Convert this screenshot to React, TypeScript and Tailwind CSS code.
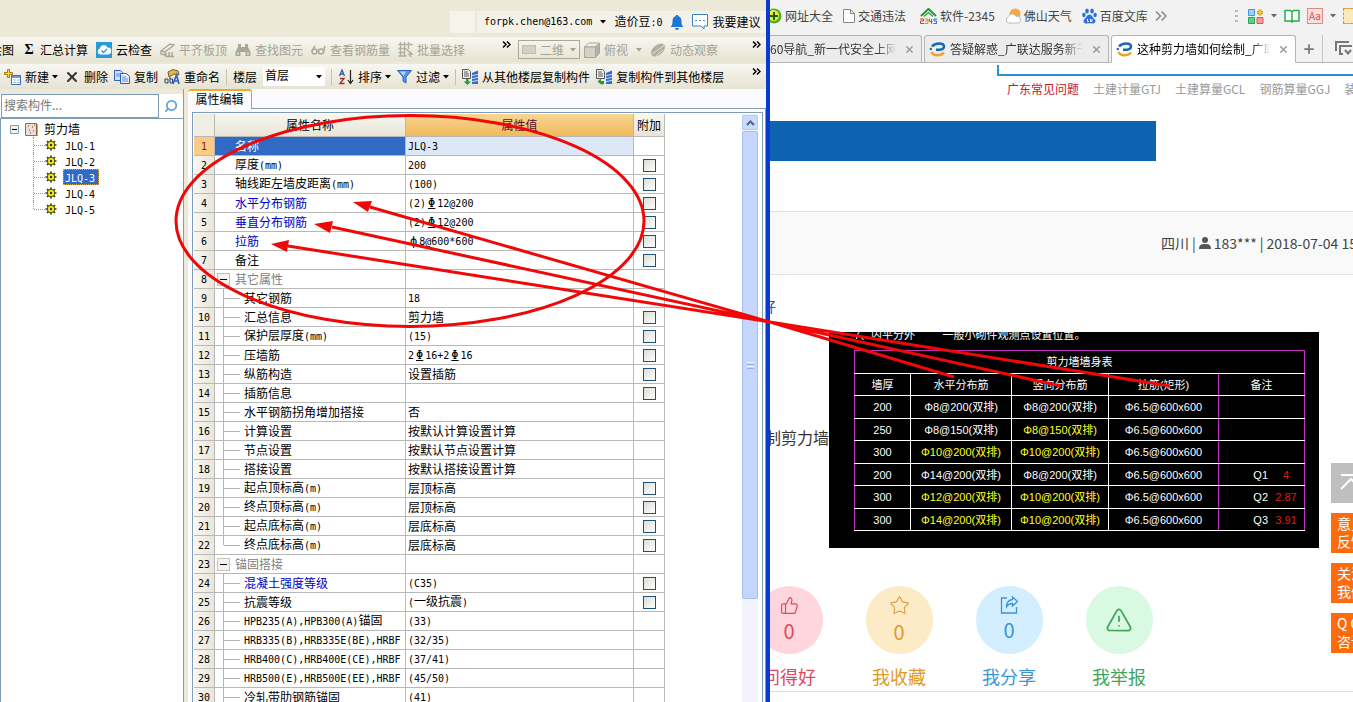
import type { ReactNode } from "react";
import { ThumbsUp, Star, TriangleAlert, X, Plus, Copy, Search } from "lucide-react";

type Row = {
  name: string;
  value?: string;
  level?: "group" | "child" | "last";
  blue?: boolean;
  check?: boolean;
};

const rows: Row[] = [
  { name: "名称", value: "JLQ-3" },
  { name: "厚度(mm)", value: "200", check: true },
  { name: "轴线距左墙皮距离(mm)", value: "(100)", check: true },
  { name: "水平分布钢筋", value: "(2)Φ12@200", blue: true, check: true },
  { name: "垂直分布钢筋", value: "(2)Φ12@200", blue: true, check: true },
  { name: "拉筋", value: "ф8@600*600", blue: true, check: true },
  { name: "备注", check: true },
  { name: "其它属性", level: "group" },
  { name: "其它钢筋", value: "18", level: "child" },
  { name: "汇总信息", value: "剪力墙", level: "child", check: true },
  { name: "保护层厚度(mm)", value: "(15)", level: "child", check: true },
  { name: "压墙筋", value: "2Φ16+2Φ16", level: "child", check: true },
  { name: "纵筋构造", value: "设置插筋", level: "child", check: true },
  { name: "插筋信息", level: "child", check: true },
  { name: "水平钢筋拐角增加搭接", value: "否", level: "child" },
  { name: "计算设置", value: "按默认计算设置计算", level: "child" },
  { name: "节点设置", value: "按默认节点设置计算", level: "child" },
  { name: "搭接设置", value: "按默认搭接设置计算", level: "child" },
  { name: "起点顶标高(m)", value: "层顶标高", level: "child", check: true },
  { name: "终点顶标高(m)", value: "层顶标高", level: "child", check: true },
  { name: "起点底标高(m)", value: "层底标高", level: "child", check: true },
  { name: "终点底标高(m)", value: "层底标高", level: "last", check: true },
  { name: "锚固搭接", level: "group" },
  { name: "混凝土强度等级", value: "(C35)", level: "child", blue: true, check: true },
  { name: "抗震等级", value: "(一级抗震)", level: "child", check: true },
  { name: "HPB235(A),HPB300(A)锚固", value: "(33)", level: "child" },
  { name: "HRB335(B),HRB335E(BE),HRBF", value: "(32/35)", level: "child" },
  { name: "HRB400(C),HRB400E(CE),HRBF", value: "(37/41)", level: "child" },
  { name: "HRB500(E),HRB500E(EE),HRBF", value: "(45/50)", level: "child" },
  { name: "冷轧带肋钢筋锚固", value: "(41)", level: "child" },
];

const components = ["JLQ-1", "JLQ-2", "JLQ-3", "JLQ-4", "JLQ-5"];

const wallRows = [
  { t: "200", h: "Φ8@200(双排)", v: "Φ8@200(双排)" },
  { t: "250", h: "Φ8@150(双排)", v: "Φ8@150(双排)", vy: true },
  { t: "300", h: "Φ10@200(双排)", v: "Φ10@200(双排)", hy: true, vy: true },
  { t: "200", h: "Φ14@200(双排)", v: "Φ8@200(双排)", q: "Q1", n: "4" },
  { t: "300", h: "Φ12@200(双排)", v: "Φ10@200(双排)", hy: true, vy: true, q: "Q2", n: "2.87" },
  { t: "300", h: "Φ14@200(双排)", v: "Φ10@200(双排)", hy: true, vy: true, q: "Q3", n: "3.91" },
];

// Latin runs are set in a half-width mono face, ribbed bar signs are underlined
function Mixed({ text }: { text: string }) {
  return (
    <>
      {text.split(/([\x20-\x7e]+|Φ|ф)/).map((part, i) => {
        if (part === "Φ" || part === "ф") {
          return (
            <span key={i} className={`px-[2px] font-['DejaVu_Sans_Mono',monospace] text-[12px] ${part === "Φ" ? "underline underline-offset-1" : ""}`}>
              {part}
            </span>
          );
        }
        if (/^[\x20-\x7e]+$/.test(part)) {
          return (
            <span key={i} className="font-['DejaVu_Sans_Mono',monospace] text-[10px]">
              {part}
            </span>
          );
        }
        return part;
      })}
    </>
  );
}

function Caret({ className = "text-black" }: { className?: string }) {
  return (
    <svg width="6" height="4" viewBox="0 0 6 4" className={`shrink-0 ${className}`}>
      <path d="M0 0h6L3 3.5z" fill="currentColor" />
    </svg>
  );
}

function ToolButton({ icon, label, caret, disabled }: { icon?: ReactNode; label: string; caret?: boolean; disabled?: boolean }) {
  return (
    <button disabled={disabled} className={`flex items-center gap-1 shrink-0 whitespace-nowrap ${disabled ? "text-[#a5a294]" : "text-black"}`}>
      {icon}
      {label}
      {caret && <Caret className="-ml-px" />}
    </button>
  );
}

function Separator() {
  return <span className="w-px h-4 bg-[#c5c2b2] shrink-0" />;
}

function MoreButton() {
  return (
    <button aria-label="更多" className="shrink-0 self-start pt-1">
      <svg width="9" height="7" viewBox="0 0 9 7" fill="none" stroke="#000" strokeWidth="1.5" className="block">
        <path d="M1 .5l3 3-3 3M5 .5l3 3-3 3" />
      </svg>
    </button>
  );
}

function CloudIcon() {
  return (
    <svg width="16" height="16" viewBox="0 0 16 16">
      <path d="M0 0h16v16H0z" fill="#2b9ad8" />
      <path d="M4.500 12.500a3 3 0 0 1-.6-5.900A4 4 0 0 1 11.500 5.500a3.500 3.500 0 0 1 .5 7z" fill="#fff" />
      <path d="M5.500 8.500l2 2 3.500-3.500" fill="none" stroke="#2b9ad8" strokeWidth="1.400" />
    </svg>
  );
}

function AlignIcon() {
  return (
    <svg width="15" height="16" viewBox="0 0 15 16" fill="none" stroke="#aaa799" strokeWidth="1.500">
      <path d="M1 9l9-7 4 1-9 7zM1 9v3l4 1V10M6 11v4M6 14.500h8M9 10v5M12 10v5" />
    </svg>
  );
}

function BinocularsIcon() {
  return (
    <svg width="16" height="14" viewBox="0 0 16 14" fill="#aaa799">
      <path d="M3 1h3v3h4V1h3v3l2.500 5v4h-5V9H5.500v4h-5V9L3 4z" />
      <path d="M2 9.500h2v2H2zM12 9.500h2v2h-2z" fill="#dcdacd" />
    </svg>
  );
}

function GlassesIcon() {
  return (
    <svg width="15" height="10" viewBox="0 0 15 10" fill="none" stroke="#aaa799" strokeWidth="1.500">
      <circle cx="3.500" cy="6.500" r="2.500" />
      <circle cx="10" cy="6.500" r="2.500" />
      <path d="M1 6L4 1M12.700 6.500L14 1M6 6.500h1.500" />
    </svg>
  );
}

function BatchIcon() {
  return (
    <svg width="15" height="15" viewBox="0 0 15 15" fill="none" stroke="#b1aea0">
      <path d="M.5 2.500h14M.5 6.500h8M.5 10.500h6M.5 14h8M2.500 0v14M6.500 0v14M10.500 0v7" strokeWidth="1.300" />
      <path d="M8 7l6 5-3 .2L13 15" strokeWidth="1.500" />
    </svg>
  );
}

function CubeIcon() {
  return (
    <svg width="16" height="16" viewBox="0 0 16 16" stroke="#aaa799" className="shrink-0">
      <path d="M.5 5l4-4h11l-4 4z" fill="#efeee6" />
      <path d="M.5 5h11v10.500H.5z" fill="#d4d2c6" />
      <path d="M11.500 5l4-4v10l-4 4.500z" fill="#b5b2a5" />
    </svg>
  );
}

function OrbitIcon() {
  return (
    <svg width="16" height="16" viewBox="0 0 16 16">
      <ellipse cx="8" cy="8" rx="8" ry="5" transform="rotate(-40 8 8)" fill="#b1aea2" />
      <path d="M2 12l9-6 4-4M6 14l7-6" stroke="#e3e1d5" fill="none" />
    </svg>
  );
}

function NewIcon() {
  return (
    <svg width="17" height="16" viewBox="0 0 17 16">
      <path d="M7.500 6.500h9v9h-9z" fill="#fff" stroke="#3d6db5" />
      <path d="M8 7h8v2H8z" fill="#6e9be0" />
      <path d="M9 11h3M13 11h3M9 13.500h3M13 13.500h3" stroke="#9ab9e8" />
      <path d="M3.500.5h2v3h3v2h-3v3h-2v-3h-3v-2h3z" fill="#fbd34b" stroke="#a97c12" />
    </svg>
  );
}

function CopyDocIcon() {
  return (
    <svg width="16" height="14" viewBox="0 0 16 14" stroke="#2f5fb0">
      <path d="M.5.5h6l2 2v8h-8z" fill="#cfe0fa" />
      <path d="M6.500 3.500h6l3 3v7h-9z" fill="#e6effd" />
      <path d="M2 4h4M2 6h4M8 7h4M8 9h6M8 11h6" stroke="#5c8ad6" />
    </svg>
  );
}

function RenameIcon() {
  return (
    <svg width="16" height="16" viewBox="0 0 16 16">
      <path d="M4 3l5-2.500 5 1.500 1 4-5-1-5 3z" fill="#e2b650" stroke="#7a5a18" />
      <path d="M1 14v-4h3v4H1.500M6 8v6h2.500v-4H6" fill="none" stroke="#2a3f6b" />
      <path d="M9 15l3.500-9L15 15M10 12h4" fill="none" stroke="#2d67c9" strokeWidth="1.700" />
    </svg>
  );
}

function SortIcon() {
  return (
    <svg width="16" height="16" viewBox="0 0 16 16" fill="none">
      <path d="M1.500 7L4 1l2.500 6M2.500 5h3" stroke="#2d5fb5" strokeWidth="1.300" />
      <path d="M2 9.500h4l-4 5h4.500" stroke="#a4302c" strokeWidth="1.400" />
      <path d="M12.500 1v13M10 11l2.500 3.500L15 11" stroke="#222" strokeWidth="1.200" />
    </svg>
  );
}

function FunnelIcon() {
  return (
    <svg width="15" height="14" viewBox="0 0 15 14">
      <path d="M.5.500h14L9 7v6L6 11V7z" fill="#5b93e6" stroke="#2a5fb8" />
      <path d="M3 1.500h6L6.500 6z" fill="#b7d3fa" />
    </svg>
  );
}

function FloorCopyIcon({ back }: { back?: boolean }) {
  return (
    <svg width="16" height="16" viewBox="0 0 16 16">
      <path d="M.5.500h6l2 2v7h-8z" fill="#f1f1f1" stroke="#555" />
      <path d="M2 3h4M2 5h5M2 7h5" stroke="#555" />
      <path d="M10 4l6-2.500V15h-6z" fill="#2f6dc6" />
      <path d="M10 6.500l6-1M10 9.500l6-1M10 12.500l6-1" stroke="#cde0fa" />
      <path d={back ? "M8 15V12H5V9.500L1.500 12.500 5 15.500z" : "M4 10h2.500v2.500H9L5.500 16 1.500 12.500H4z"} fill="#2b9a3e" />
    </svg>
  );
}

function GearIcon() {
  return (
    <svg width="12" height="12" viewBox="0 0 12 12">
      <path d="M6 .500v11M.5 6h11M2 2l8 8M10 2l-8 8" stroke="#3a3a00" strokeWidth="1.600" />
      <circle cx="6" cy="6" r="3.800" fill="#f2e81c" stroke="#4a4800" />
      <circle cx="6" cy="6" r="1.200" fill="#333" />
    </svg>
  );
}

function GlodonIcon() {
  return (
    <svg width="17" height="15" viewBox="0 0 17 15" fill="none" strokeWidth="2.500" className="shrink-0">
      <path d="M3 4.500C6 .500 15 .500 15 4.500c0 3-4 3.500-8 3.300" stroke="#1769b8" />
      <path d="M2.500 10c2 4.500 9.500 4 12.500.500" stroke="#f0a02c" />
      <circle cx="1.800" cy="7" r="1.200" fill="#1769b8" stroke="none" />
    </svg>
  );
}

function TopBar() {
  return (
    <div className="h-[37px] flex items-start justify-end gap-[2px] pt-[11px]">
      <span className="w-[25px] h-[22px] bg-[#f5f3ea]" />
      <div className="h-[22px] w-[289px] flex items-center gap-2 pl-[7px] bg-[#f4f2e8]">
        <button className="flex items-center gap-2">
          <Mixed text="forpk.chen@163.com" />
          <Caret />
        </button>
        <span><Mixed text="造价豆:0" /></span>
        <button aria-label="通知">
          <svg width="14" height="15" viewBox="0 0 14 15" fill="#1d77d2">
            <path d="M7 0c1 0 1.500.6 1.500 1.300C11 2 11.500 4 11.500 6.500c0 3 .5 4 2 5.500H.5c1.500-1.500 2-2.500 2-5.500C2.500 4 3 2 5.500 1.300 5.500.600 6 0 7 0zM5 13h4c0 2.500-4 2.500-4 0z" />
          </svg>
        </button>
        <button className="flex items-center gap-1 whitespace-nowrap">
          <svg width="16" height="16" viewBox="0 0 16 16" fill="#fff" stroke="#3b83c8">
            <path d="M.5.500h15v11.500H12v3l-3-3H.5z" />
            <path d="M3 6.500h2M7 6.500h2M11 6.500h2" />
          </svg>
          我要建议
        </button>
      </div>
    </div>
  );
}

function Toolbars() {
  const bar = "h-[25px] flex items-center bg-linear-to-b from-[#f8f7f1] to-[#e6e3d2] pr-[5px]";
  return (
    <div className="flex flex-col gap-[2px]">
      <div className={bar}>
        <div className="flex-1 flex items-center gap-2">
          <button className="w-[14px] overflow-hidden flex justify-end whitespace-nowrap">绘图</button>
          <ToolButton icon={<span className="w-[14px] text-[14px] font-bold text-center font-['Liberation_Serif',serif]">Σ</span>} label="汇总计算" />
          <ToolButton icon={<CloudIcon />} label="云检查" />
          <ToolButton disabled icon={<AlignIcon />} label="平齐板顶" />
          <ToolButton disabled icon={<BinocularsIcon />} label="查找图元" />
          <ToolButton disabled icon={<GlassesIcon />} label="查看钢筋量" />
          <ToolButton disabled icon={<BatchIcon />} label="批量选择" />
        </div>
        <MoreButton />
        <div className="w-[250px] self-stretch flex items-center pl-[7px] gap-1">
          <button disabled className="h-[19px] w-[62px] shrink-0 flex items-center gap-1 px-[3px] border border-[#aca899] text-[#a5a294] whitespace-nowrap">
            <span className="w-[14px] h-[9px] shrink-0 bg-[#d3d1c5] border border-[#c0beb0]" />
            二维
            <Caret className="ml-auto text-[#a5a294]" />
          </button>
          <ToolButton disabled icon={<CubeIcon />} label="俯视" />
          <span className="px-1"><Caret className="text-[#a5a294]" /></span>
          <ToolButton disabled icon={<OrbitIcon />} label="动态观察" />
          <span className="flex-1" />
          <MoreButton />
        </div>
      </div>
      <div className={bar}>
        <div className="flex-1 flex items-center gap-[6px] pl-1">
          <ToolButton icon={<NewIcon />} label="新建" caret />
          <ToolButton icon={<X size={16} strokeWidth={3} className="text-[#333]" />} label="删除" />
          <ToolButton icon={<CopyDocIcon />} label="复制" />
          <ToolButton icon={<RenameIcon />} label="重命名" />
          <Separator />
          <label htmlFor="floor">楼层</label>
          <div className="relative flex items-center">
            <select id="floor" className="appearance-none w-[62px] h-[19px] bg-white pl-[2px] pb-[3px] leading-4 outline-none">
              <option>首层</option>
            </select>
            <span className="absolute right-[3px] pointer-events-none"><Caret /></span>
          </div>
          <Separator />
          <ToolButton icon={<SortIcon />} label="排序" caret />
          <ToolButton icon={<FunnelIcon />} label="过滤" caret />
          <Separator />
          <ToolButton icon={<FloorCopyIcon />} label="从其他楼层复制构件" />
          <ToolButton icon={<FloorCopyIcon back />} label="复制构件到其他楼层" />
        </div>
        <MoreButton />
      </div>
    </div>
  );
}

function ComponentTree() {
  return (
    <aside className="w-[184px] shrink-0 flex flex-col pt-[5px] bg-[#ece9d8] border-r border-[#8a9bb0]">
      <div className="flex h-6 bg-white">
        <input aria-label="搜索构件" placeholder="搜索构件..." className="w-[158px] border border-[#7f9db9] bg-white px-[2px] pb-[3px] ml-px placeholder:text-[#777] outline-none" />
        <button aria-label="搜索" className="flex-1 flex items-center justify-center text-[#5aa2e0]">
          <Search size={14} strokeWidth={3} className="-scale-x-100" />
        </button>
      </div>
      <div className="flex-1 min-h-0 bg-white border-l border-t border-[#7f9db9] pt-[2px] pl-[9px]">
        <div className="flex items-center h-4 gap-[6px]">
          <svg width="9" height="9" viewBox="0 0 9 9">
            <path d="M.5.500h8v8h-8z" fill="#f3f1ea" stroke="#7b9ebd" />
            <path d="M2 4.500h5" stroke="#000" />
          </svg>
          <svg width="13" height="13" viewBox="0 0 13 13">
            <path d="M.5.500h11v12H.5z" fill="#eadfd8" stroke="#a9653a" />
            <path d="M3 3h1M7 4h1M4 7h1M8 8h1M5 10h1M9 2h1" stroke="#7c3f27" />
            <path d="M12 1v12" stroke="#8d4a20" />
          </svg>
          <span>剪力墙</span>
        </div>
        <ul className="pl-[23px]">
          {components.map((name, i) => (
            <li key={name} className="flex items-center h-4">
              <span className={`border-l border-dotted border-[#999] ${i === components.length - 1 ? "h-2 self-start" : "h-4"}`} />
              <span className="w-[11px] border-t border-dotted border-[#999]" />
              <GearIcon />
              <button className={`ml-[6px] h-4 px-[2px] leading-4 ${name === "JLQ-3" ? "bg-[#316ac5] text-white pr-1 outline-1 -outline-offset-1 outline-dotted outline-[#d8a050]" : ""}`}>
                <Mixed text={name} />
              </button>
            </li>
          ))}
        </ul>
      </div>
    </aside>
  );
}

function PropertyName({ row }: { row: Row }) {
  const color = row.blue ? "text-[#0000c8]" : row.level === "group" ? "text-[#808080]" : "";
  if (!row.level) {
    return <div className={`pl-5 ${color}`}><Mixed text={row.name} /></div>;
  }
  if (row.level === "group") {
    return (
      <div className={`flex items-center gap-[5px] pl-[2px] ${color}`}>
        <button aria-label={row.name} className="w-[13px] h-[13px] border border-[#c5c2b8] bg-[#f4f3ee] flex items-center justify-center">
          <span className="w-[7px] h-px bg-black" />
        </button>
        {row.name}
      </div>
    );
  }
  return (
    <div className={`flex items-center h-[18px] pl-2 ${color}`}>
      <span className={`w-px bg-[#b5b5b5] ${row.level === "last" ? "h-[9px] self-start" : "h-[18px]"}`} />
      <span className="w-4 h-px bg-[#b5b5b5] mr-1" />
      <span><Mixed text={row.name} /></span>
    </div>
  );
}

function PropertyTable() {
  const line = "border-r border-b border-[#b8b8b8]";
  return (
    <table className="w-[471px] shrink-0 table-fixed border-separate border-spacing-0 self-start">
      <colgroup>
        <col className="w-[21px]" />
        <col className="w-[191px]" />
        <col className="w-[228px]" />
        <col className="w-[31px]" />
      </colgroup>
      <thead>
        <tr className="h-[23px]">
          <th className={`${line} bg-[#f1efe4]`} />
          <th className={`${line} bg-linear-to-b from-[#f8f7f0] to-[#e8e5d6] font-normal`}>属性名称</th>
          <th className={`${line} bg-linear-to-b from-[#f8d592] to-[#f0ba58] font-normal text-[#5a1030]`}>属性值</th>
          <th className={`${line} bg-linear-to-b from-[#f8f7f0] to-[#e8e5d6] font-normal whitespace-nowrap`}>附加</th>
        </tr>
      </thead>
      <tbody>
        {rows.map((row, i) => (
          <tr key={i} className="h-[19px]">
            <td className={`${line} p-0 text-center ${i === 0 ? "bg-[#fbcb86] text-[#8a1a1a]" : "bg-linear-to-r from-[#f8f7f2] to-[#e9e6d9]"}`}>
              <Mixed text={String(i + 1)} />
            </td>
            <td className={`${line} p-0 whitespace-nowrap overflow-hidden ${i === 0 ? "bg-[#316ac5] text-white" : ""}`}>
              <PropertyName row={row} />
            </td>
            <td className={`${line} py-0 pr-0 pl-[2px] whitespace-nowrap ${i === 0 ? "bg-[#dde8f7]" : ""}`}>
              <Mixed text={row.value ?? ""} />
            </td>
            <td className={`${line} p-0`}>
              {row.check && (
                <input type="checkbox" aria-label={row.name} className="block mx-auto appearance-none w-[13px] h-[13px] border border-[#1c5180] bg-linear-to-br from-[#dcdcd7] to-white" />
              )}
            </td>
          </tr>
        ))}
      </tbody>
    </table>
  );
}

function PropertyPanel() {
  return (
    <section className="flex-1 min-w-0 flex flex-col pl-1 bg-[#ece9d8]">
      <div className="flex h-5 bg-[#fbfbfd]">
        <button className="w-[64px] h-5 pb-[2px] bg-[#fcfcfe] border-t-2 border-[#f0a92b] border-r border-r-[#91a7b4] rounded-t-[3px]">属性编辑</button>
        <span className="flex-1 border-b border-[#8a9bb0]" />
      </div>
      <div className="flex-1 min-h-0 flex flex-col bg-[#fbfbfd] pt-[3px] pl-1 pr-[2px] border-r border-[#8a9bb0]">
        <div className="flex-1 min-h-0 flex justify-between bg-white border border-b-0 border-[#7f9db9] pt-px pl-px pr-1 overflow-hidden">
          <PropertyTable />
          <div className="w-4 bg-[#f3f3fb] flex flex-col gap-px pt-px">
            <button aria-label="向上滚动" className="h-[15px] rounded-[2px] border border-[#b4c8f6] bg-[#cbdafc] flex items-center justify-center">
              <svg width="9" height="6" viewBox="0 0 9 6" fill="none" stroke="#4d6185" strokeWidth="2">
                <path d="M1 5l3.500-3.500L8 5" />
              </svg>
            </button>
            <div className="h-[468px] rounded-[2px] border border-[#a6bdf0] bg-[#c5d5fc] flex flex-col items-center justify-center gap-px">
              <span className="w-[7px] h-px bg-[#f0f4fe]" />
              <span className="w-[7px] h-px bg-[#8cb0f8]" />
              <span className="w-[7px] h-px bg-[#f0f4fe]" />
              <span className="w-[7px] h-px bg-[#8cb0f8]" />
            </div>
          </div>
        </div>
      </div>
    </section>
  );
}

function Bookmark({ icon, label }: { icon: ReactNode; label: string }) {
  return (
    <a href="#" className="flex items-center gap-[3px] shrink-0 whitespace-nowrap">
      {icon}
      {label}
    </a>
  );
}

function BookmarksBar() {
  return (
    <nav className="h-[35px] shrink-0 flex items-center pb-[3px] gap-[10px] bg-[#f2f2f2] text-[#444] overflow-hidden">
      <Bookmark
        label="网址大全"
        icon={
          <svg width="12" height="16" viewBox="4 0 12 16">
            <circle cx="8" cy="8" r="7.500" fill="#49b02c" />
            <circle cx="7.500" cy="7.500" r="5.500" fill="#f3ea2e" />
            <path d="M8 4v8M4 8h8" stroke="#1b5c1b" strokeWidth="2" />
          </svg>
        }
      />
      <Bookmark
        label="交通违法"
        icon={
          <svg width="12" height="14" viewBox="0 0 12 14" fill="#fff" stroke="#888">
            <path d="M.5.500h7l4 4v9H.5zM7.500.500v4h4" />
          </svg>
        }
      />
      <div className="pl-1 flex gap-[10px]">
        <Bookmark
          label="软件-2345"
          icon={
            <svg width="17" height="16" viewBox="0 0 17 16" fill="none">
              <path d="M1 8l7.500-7L16 8" stroke="#2b9a3b" strokeWidth="2.200" />
              <path d="M4 8.500l4.500-4 4.500 4" stroke="#2b9a3b" strokeWidth="1.200" />
              <path d="M0 11h3.500v2H.5v2.500H4" stroke="#d33" />
              <path d="M4.500 11H8v4.500H4.500M5 13h3" stroke="#e78a1e" />
              <path d="M9.500 10.500V13.500H12.500M11.500 11v5" stroke="#2b9a3b" />
              <path d="M17 11h-3v2h2.500v2.500h-3" stroke="#2a6fd0" />
            </svg>
          }
        />
        <Bookmark
          label="佛山天气"
          icon={
            <svg width="16" height="16" viewBox="0 0 16 16">
              <circle cx="10" cy="6" r="5.500" fill="#f8a93c" />
              <path d="M3.500 15a3.500 3.500 0 0 1 0-6.500 4 4 0 0 1 7.500 0 3.300 3.300 0 0 1 2 6.500z" fill="#fff" stroke="#bbb" />
            </svg>
          }
        />
      </div>
      <div className="flex items-center gap-[7px]">
        <Bookmark
          label="百度文库"
          icon={
            <svg width="15" height="16" viewBox="0 0 15 16" fill="#2d6fe0">
              <ellipse cx="5" cy="3" rx="1.800" ry="2.600" />
              <ellipse cx="10" cy="3" rx="1.800" ry="2.600" />
              <ellipse cx="1.900" cy="7" rx="1.700" ry="2.300" />
              <ellipse cx="13.100" cy="7" rx="1.700" ry="2.300" />
              <path d="M7.500 6.500c2.500 0 3 3 5 4.500 2 2 .5 5-2 4.500-2-.4-4-.4-6 0-2.500.5-4-2.500-2-4.500 2-1.500 2.500-4.500 5-4.500z" />
              <path d="M5.500 11v2.500h1.500M8.500 11v2.500H10V11" stroke="#fff" fill="none" />
            </svg>
          }
        />
        <button aria-label="更多书签">
          <svg width="12" height="10" viewBox="0 0 12 10" fill="none" stroke="#888" strokeWidth="1.500">
            <path d="M1 .500l4.500 4.500L1 9.500M6.500.500L11 5 6.500 9.500" />
          </svg>
        </button>
      </div>
      <span className="flex-1" />
      <div className="flex items-center gap-[7px] shrink-0">
        <span className="flex flex-col gap-[3px] mr-[3px]">
          <i className="w-[3px] h-[2px] bg-[#bbb]" />
          <i className="w-[3px] h-[2px] bg-[#bbb]" />
          <i className="w-[3px] h-[2px] bg-[#bbb]" />
        </span>
        <button aria-label="扩展">
          <svg width="16" height="15" viewBox="0 0 16 15">
            <path d="M.5.500h6v6h-6z" fill="#9fd0f5" stroke="#3f97dc" />
            <path d="M.5 8.500h6v6h-6z" fill="#62cf84" stroke="#22a84e" />
            <path d="M9 8.500h6v6H9z" fill="#f59a94" stroke="#e0594f" />
            <path d="M12 .500v6M9 3.500h6" stroke="#d99a12" strokeWidth="3" />
            <path d="M12 1v5M9.500 3.500h5" stroke="#ffd84a" />
          </svg>
        </button>
        <Caret className="text-[#666]" />
        <button aria-label="阅读">
          <svg width="16" height="14" viewBox="0 0 16 14" fill="#fff" stroke="#22b14c" strokeWidth="1.500">
            <path d="M1 1.500h5.500L8 3l1.500-1.500H15V12H9.500L8 13l-1.500-1H1zM8 3v10" />
          </svg>
        </button>
        <button className="w-4 h-4 border border-[#e08a86] bg-[#fbe0de] text-[10px] leading-3 text-[#d9534f]">Aa</button>
        <Caret className="text-[#666]" />
        <span className="w-[10px] h-4 border border-r-0 border-dashed border-[#d99a3a] bg-[#fde8bd]" />
      </div>
    </nav>
  );
}

function BrowserTab({ title, icon, active }: { title: string; icon?: boolean; active?: boolean }) {
  return (
    <div
      className={`flex items-center gap-1 px-[6px] border border-[#b5b5b5] rounded-t-[3px] min-w-0 ${
        icon ? "w-[186px] pl-1" : "w-[153px] border-l-0 pl-0 rounded-tl-none"
      } ${active ? "bg-white border-b-white -mb-px text-black" : "border-b-0 bg-[#ececec] text-[#333]"}`}
    >
      {icon && <GlodonIcon />}
      <span className="flex-1 overflow-hidden whitespace-nowrap mask-r-from-85%">{title}</span>
      <button aria-label="关闭标签" className="pl-1">
        <X size={11} strokeWidth={3} className="text-[#999]" />
      </button>
    </div>
  );
}

function TabStrip() {
  return (
    <div className="h-7 shrink-0 flex gap-[2px] bg-[#f2f2f2] border-b border-[#b5b5b5]">
      <BrowserTab title="60导航_新一代安全上网导航" />
      <BrowserTab title="答疑解惑_广联达服务新干线" icon />
      <BrowserTab title="这种剪力墙如何绘制_广联达" icon active />
      <button aria-label="新标签" className="px-1"><Plus size={14} strokeWidth={3} className="text-[#777]" /></button>
      <span className="w-px bg-[#c5c5c5]" />
      <button aria-label="恢复标签" className="pl-[10px] text-[#777]">
        <svg width="18" height="15" viewBox="0 0 18 15" fill="none" stroke="currentColor" strokeWidth="2">
          <path d="M1 10V1h13M8 13H5V5h12M10 9l3 3.500L16 9" />
        </svg>
      </button>
    </div>
  );
}

function WallDrawing() {
  const cell = "p-0 border-white border-y font-normal whitespace-nowrap";
  return (
    <figure className="w-[490px] h-[216px] shrink-0 bg-black text-white overflow-hidden px-[25px] font-['Liberation_Sans','Noto_Sans_CJK_SC',sans-serif] text-[11px]">
      <p className="h-[18px] leading-[6px] whitespace-pre">7、内平分外         一般小砌件观测点设置位置。</p>
      <table className="w-[450px] table-fixed border-collapse text-center leading-4">
        <colgroup>
          <col className="w-[56px]" />
          <col className="w-[101px]" />
          <col className="w-[97px]" />
          <col className="w-[110px]" />
          <col className="w-[86px]" />
        </colgroup>
        <thead>
          <tr className="h-[23px]">
            <th colSpan={5} className="p-0 font-normal border border-t-[#c030c0] border-x-[#c030c0] border-b-white">剪力墙墙身表</th>
          </tr>
          <tr className="h-[22px]">
            <th className={`${cell} border-x border-l-[#c030c0]`}>墙厚</th>
            <th className={`${cell} border-r`}>水平分布筋</th>
            <th className={`${cell} border-r`}>竖向分布筋</th>
            <th className={`${cell} border-r border-r-[#c030c0]`}>拉筋(矩形)</th>
            <th className={`${cell} border-r border-r-[#c030c0]`}>备注</th>
          </tr>
        </thead>
        <tbody>
          {wallRows.map((r, i) => (
            <tr key={i} className={i % 2 ? "h-[22px]" : "h-[23px]"}>
              <td className={`${cell} border-x border-l-[#c030c0]`}>{r.t}</td>
              <td className={`${cell} border-r ${r.hy ? "text-[#ffff20]" : ""}`}>{r.h}</td>
              <td className={`${cell} border-r ${r.vy ? "text-[#ffff20]" : ""}`}>{r.v}</td>
              <td className={`${cell} border-r border-r-[#c030c0]`}>Φ6.5@600x600</td>
              <td className={`${cell} border-r border-r-[#c030c0]`}>
                <div className="flex justify-end">
                  <span>{r.q}</span>
                  <span className="w-[36px] text-[#e01818]">{r.n}</span>
                </div>
              </td>
            </tr>
          ))}
        </tbody>
      </table>
    </figure>
  );
}

function Action({ label, icon, circle, count }: { label: string; icon: ReactNode; circle: string; count?: number }) {
  return (
    <button className={`w-[110px] shrink-0 flex flex-col items-center gap-[9px] ${circle}`}>
      <span className="w-[67px] h-[68px] rounded-full flex flex-col items-center justify-center gap-[2px] bg-(--tint)">
        {icon}
        {count !== undefined && <span className="text-[20px] leading-7">{count}</span>}
      </span>
      <span className="text-[18px] leading-[26px]">{label}</span>
    </button>
  );
}

function ForumPage() {
  return (
    <main className="flex-1 min-h-0 relative flex flex-col bg-white overflow-hidden font-['Noto_Sans_CJK_SC',sans-serif]">
      <div className="h-[11px] mt-[2px] shrink-0 ml-[227px] border-l-2 border-b-2 border-[#2b90d8]" />
      <nav className="flex gap-[14px] pl-[237px] pt-1 h-[45px] shrink-0 leading-[18px] whitespace-nowrap text-[#999]">
        <a href="#" className="text-[#c8161d]">广东常见问题</a>
        <a href="#">土建计量GTJ</a>
        <a href="#">土建算量GCL</a>
        <a href="#">钢筋算量GGJ</a>
        <a href="#">装饰算量</a>
      </nav>
      <div className="w-[386px] h-10 shrink-0 bg-[#0e63b1]" />
      <div className="mt-[50px] h-16 shrink-0 flex items-center gap-[3px] pl-[391px] border-y border-[#e2e2e2] bg-[#f9f9f9] text-[14px] text-[#444] whitespace-nowrap">
        <span>四川</span>
        <span>|</span>
        <svg width="12" height="12" viewBox="0 0 12 12" fill="#555" className="shrink-0">
          <circle cx="6" cy="3" r="3" />
          <path d="M0 12c0-4 2-5 6-5s6 1 6 5z" />
        </svg>
        <span>183***</span>
        <span>|</span>
        <span>2018-07-04 15:20:36</span>
      </div>
      <h1 className="h-[57px] shrink-0 flex items-center pt-1 text-[#1a5fb0] text-[16px]">
        <span className="w-[6px] overflow-hidden flex justify-end">好</span>
      </h1>
      <div className="flex shrink-0 text-[16px] text-[#333]">
        <p className="w-[59px] pt-[97px] overflow-hidden flex justify-end whitespace-nowrap">制剪力墙</p>
        <WallDrawing />
      </div>
      <div className="mt-[38px] h-[106px] shrink-0 flex -ml-[36px] border-b border-[#ddd]">
        <Action label="问得好" count={0} circle="text-[#e0485f] [--tint:#ffd6dd]" icon={<ThumbsUp size={19} strokeWidth={1.5} />} />
        <Action label="我收藏" count={0} circle="text-[#dc9a2c] [--tint:#fdebc8]" icon={<Star size={21} strokeWidth={1.2} />} />
        <Action
          label="我分享"
          count={0}
          circle="text-[#3a94d8] [--tint:#d3eefe]"
          icon={
            <svg width="19" height="18" viewBox="0 0 19 18" fill="none" stroke="currentColor" strokeWidth="1.300">
              <path d="M7 2H1.500v15h15v-6" />
              <path d="M12.500 1l5 4.500-5 4.500V7.500C9.500 7.500 8 8.500 6.500 11c0-4.500 2.500-7 6-7.500z" />
            </svg>
          }
        />
        <Action label="我举报" circle="text-[#3fa55c] [--tint:#d9f9e2]" icon={<TriangleAlert size={28} strokeWidth={1.5} />} />
      </div>
      <div className="absolute right-0 top-[400px] w-[22px] flex flex-col gap-[10px] overflow-hidden text-white">
        <button aria-label="返回顶部" className="h-10 w-10 bg-[#bfbfbf] flex items-center justify-center">
          <svg width="24" height="20" viewBox="0 0 24 20" fill="none" stroke="#fff" strokeWidth="2">
            <path d="M2 2h20M2 16L12 6l10 10" />
          </svg>
        </button>
        <a href="#" className="h-10 w-10 bg-[#ff6a0a] pl-[6px] text-[14px] leading-[18px] pt-px">意见反馈</a>
        <a href="#" className="h-10 w-10 bg-[#ff6a0a] pl-[6px] text-[14px] leading-[18px] pt-px">关注我们</a>
        <a href="#" className="h-10 w-10 bg-[#ff6a0a] pl-[6px] text-[14px] leading-[18px] pt-px whitespace-pre-line">{"Q Q\n咨询"}</a>
      </div>
    </main>
  );
}

// red pen marks drawn over both windows
function Markup() {
  return (
    <svg width="1353" height="702" viewBox="0 0 1353 702" className="absolute left-0 top-0 pointer-events-none" fill="none" stroke="#f00808" strokeWidth="3">
      <ellipse cx="410" cy="221" rx="234" ry="105.500" />
      <path d="M370 207L770 322L954 377M332 227L770 322L1061 386M288 246L770 322L1170 386" />
      <path d="M353 202l19-1-4 11zM314 224l19-3-3 12zM271 244l18-4-2 12z" fill="#f00808" stroke="none" />
    </svg>
  );
}

export default function App() {
  return (
    <div className="relative h-screen flex overflow-hidden bg-white text-[12px] leading-4 text-black font-['Noto_Sans_CJK_SC',sans-serif]">
      <div className="w-[770px] shrink-0 flex flex-col bg-[#ece9d8] border-r-4 border-[#0a3bd0]">
        <TopBar />
        <Toolbars />
        <div className="flex-1 min-h-0 flex">
          <ComponentTree />
          <PropertyPanel />
        </div>
      </div>
      <div className="flex-1 min-w-0 flex flex-col">
        <BookmarksBar />
        <TabStrip />
        <ForumPage />
      </div>
      <Markup />
    </div>
  );
}
